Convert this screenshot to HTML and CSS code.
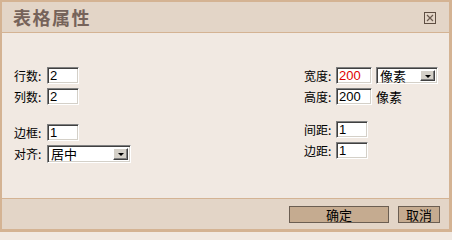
FILE: index.html
```html
<!DOCTYPE html>
<html lang="zh">
<head>
<meta charset="utf-8">
<title>表格属性</title>
<link rel="stylesheet" href="styles.css">
</head>
<body>
<div class="dialog">
  <div class="titlebar">
    <span class="title">表格属性</span>
    <span class="close" title="关闭">
      <svg width="12" height="12" viewBox="0 0 12 12">
        <rect x="0.5" y="0.5" width="11" height="11" fill="none" stroke="#5e4e42" stroke-width="1"/>
        <path d="M3 3 L9 9 M9 3 L3 9" stroke="#6a5a4e" stroke-width="1.2"/>
      </svg>
    </span>
  </div>
  <div class="content">
    <div class="col col-left">
      <div class="group">
        <div class="row"><span class="label">行数:</span><input class="field w31" value="2"></div>
        <div class="row"><span class="label">列数:</span><input class="field w31" value="2"></div>
      </div>
      <div class="group group-second">
        <div class="row"><span class="label">边框:</span><input class="field w31" value="1"></div>
        <div class="row">
          <span class="label">对齐:</span>
          <div class="select w84"><span class="sel-value">居中</span><span class="sel-btn"><span class="tri"></span></span></div>
        </div>
      </div>
    </div>
    <div class="col col-right">
      <div class="group">
        <div class="row"><span class="label">宽度:</span><input class="field w36 red" value="200"><div class="select w62 ml4"><span class="sel-value">像素</span><span class="sel-btn"><span class="tri"></span></span></div></div>
        <div class="row"><span class="label">高度:</span><input class="field w36" value="200"><span class="unit">像素</span></div>
      </div>
      <div class="group group-second-r">
        <div class="row"><span class="label">间距:</span><input class="field w32" value="1"></div>
        <div class="row"><span class="label">边距:</span><input class="field w32" value="1"></div>
      </div>
    </div>
  </div>
  <div class="footer">
    <button class="btn btn-ok">确定</button>
    <button class="btn btn-cancel">取消</button>
  </div>
</div>
</body>
</html>
```
FILE: styles.css
```css
* { box-sizing: border-box; }
html, body { margin: 0; padding: 0; }
body {
  width: 452px;
  height: 232px;
  font-family: "Noto Sans CJK SC", "Liberation Sans", sans-serif;
  font-size: 12px;
  color: #000;
  background: #f1e9e2;
}
.dialog {
  width: 452px;
  height: 232px;
  border-style: solid;
  border-color: #d4b393;
  border-width: 2px 3px 3px 2px;
  display: flex;
  flex-direction: column;
  background: #f1e9e2;
}
.titlebar {
  height: 31px;
  flex: none;
  background: #e3d5c7;
  border-bottom: 1px solid #d4b393;
  display: flex;
  align-items: center;
  justify-content: space-between;
  padding: 0 13px 0 11px;
}
.title {
  font-size: 18px;
  font-weight: bold;
  letter-spacing: 1.5px;
  color: #76635a;
  line-height: 30px;
}
.close { display: flex; width: 12px; height: 12px; margin-top: 2px; }
.content {
  flex: 1;
  display: flex;
  justify-content: space-between;
  padding: 34px 11px 0 12px;
}
.col { display: flex; flex-direction: column; }
.group { display: flex; flex-direction: column; gap: 4px; }
.group-second { margin-top: 19px; }
.group-second-r { margin-top: 16px; }
.row { display: flex; align-items: center; height: 17px; }
.label { width: 33px; line-height: 17px; white-space: nowrap; }
.col-right .label { width: 32px; }
.field {
  height: 17px;
  padding: 0 0 0 2px;
  margin: 0;
  font-family: "Liberation Sans", Arial, sans-serif;
  font-size: 13px;
  color: #000;
  background: #fff;
  border-style: solid;
  border-width: 1px;
  border-color: #808080 #ffffff #ffffff #808080;
  box-shadow: inset 1px 1px 0 #404040, inset -1px -1px 0 #d4d0c8;
  outline: none;
}
.field.red { color: #e00000; }
.w31 { width: 32px; }
.w32 { width: 32px; }
.w36 { width: 36px; }
.w84 { width: 84px; }
.w62 { width: 62px; }
.ml4 { margin-left: 4px; }
.select {
  height: 18px;
  display: flex;
  align-items: center;
  background: #fff;
  border-style: solid;
  border-width: 1px;
  border-color: #808080 #ffffff #ffffff #808080;
  box-shadow: inset 1px 1px 0 #404040, inset -1px -1px 0 #d4d0c8;
  padding: 2px 2px 2px 3px;
}
.col-right .select { height: 17px; }
.sel-value { flex: 1; font-size: 13px; line-height: 14px; }
.sel-btn {
  width: 15px;
  height: 100%;
  background: #d4d0c8;
  border-style: solid;
  border-width: 1px;
  border-color: #ffffff #404040 #404040 #ffffff;
  box-shadow: inset -1px -1px 0 #808080;
  display: flex;
  align-items: center;
  justify-content: center;
}
.tri {
  width: 0; height: 0;
  border-left: 3px solid transparent;
  border-right: 3px solid transparent;
  border-top: 3px solid #000;
  margin-top: 1px;
}
.unit { margin-left: 4px; font-size: 13px; }
.footer {
  height: 31px;
  flex: none;
  background: #e3d5c7;
  border-top: 1px solid #d4b393;
  display: flex;
  justify-content: flex-end;
  align-items: flex-start;
  gap: 9px;
  padding: 7px 9px 0 0;
}
.btn {
  height: 17px;
  margin: 0;
  padding: 0;
  font-family: "Noto Sans CJK SC", sans-serif;
  font-size: 13px;
  line-height: 15px;
  color: #000;
  background: #c5ab90;
  border: 1px solid #6b5e52;
}
.btn-ok { width: 100px; }
.btn-cancel { width: 42px; }
```
